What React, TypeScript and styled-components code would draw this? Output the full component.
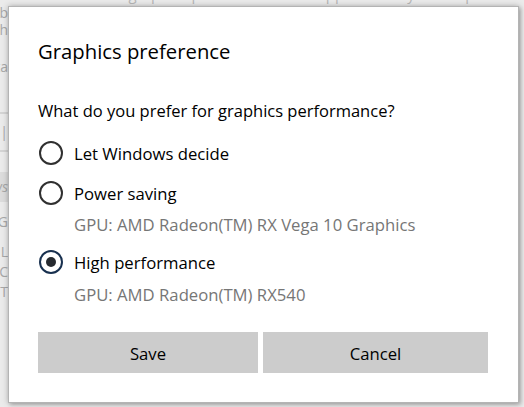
import React from "react";
import styled, { createGlobalStyle } from "styled-components";

const Global = createGlobalStyle`
  html, body { margin: 0; padding: 0; }
  body {
    width: 524px;
    height: 407px;
    overflow: hidden;
    background: #e8e8e8;
    font-family: "Segoe UI", "Open Sans", "Noto Sans", sans-serif;
  }
`;

const Screen = styled.div`
  position: relative;
  width: 524px;
  height: 407px;
  overflow: hidden;
  background: #ebebeb;
`;

const Backdrop = styled.div`
  display: flex;
  flex-direction: column;
  width: 100%;
  height: 100%;
`;

const TopStrip = styled.div`
  height: 6px;
  overflow: hidden;
  padding-left: 60px;
  color: #b8b8b8;
  font-size: 15px;
  line-height: 20px;
  white-space: nowrap;
`;

const TopText = styled.div`
  margin-top: -16px;
`;

const LeftStrip = styled.div`
  display: flex;
  flex-direction: column;
  width: 8px;
  overflow: hidden;
`;

const EdgeRow = styled.div<{ $h: number; $band?: boolean; $line?: boolean }>`
  height: ${(p) => p.$h}px;
  display: flex;
  justify-content: flex-end;
  align-items: center;
  white-space: nowrap;
  color: #a8a8a8;
  font-size: 14px;
  line-height: 14px;
  background: ${(p) => (p.$band ? "#dcdcdc" : "transparent")};
  border-bottom: ${(p) => (p.$line ? "2px solid #d4d4d4" : "none")};
`;

const Dialog = styled.div`
  position: absolute;
  left: 8px;
  top: 6px;
  width: 511px;
  height: 397px;
  box-sizing: border-box;
  background: #ffffff;
  border: 1px solid #b4b4b4;
  box-shadow: 0 0 6px rgba(0, 0, 0, 0.25), 2px 2px 4px rgba(0, 0, 0, 0.2);
  padding: 30px 30px 0 29px;
  display: flex;
  flex-direction: column;
  color: #000;
`;

const Title = styled.h1`
  margin: 0;
  font-weight: 400;
  font-size: 20.3px;
  line-height: 28px;
`;

const Question = styled.p`
  margin: 36px 0 0 0;
  font-size: 16.5px;
  line-height: 20px;
`;

const Options = styled.div`
  display: flex;
  flex-direction: column;
  margin-top: 12px;
`;

const OptionRow = styled.label<{ $gapTop: number }>`
  display: flex;
  align-items: center;
  gap: 11px;
  height: 40px;
  margin-top: ${(p) => p.$gapTop}px;
  font-size: 16.7px;
  line-height: 20px;
`;

const Label = styled.span`
  padding-top: 1px;
`;

const Radio = styled.span<{ $checked?: boolean }>`
  flex: none;
  width: 24px;
  height: 24px;
  margin-left: 1px;
  box-sizing: border-box;
  border-radius: 50%;
  border: 2px solid ${(p) => (p.$checked ? "#18304f" : "#303030")};
  display: flex;
  align-items: center;
  justify-content: center;
  &::after {
    content: "";
    display: ${(p) => (p.$checked ? "block" : "none")};
    width: 10px;
    height: 10px;
    border-radius: 50%;
    background: #262a30;
  }
`;

const Description = styled.div<{ $gapTop: number }>`
  margin: ${(p) => p.$gapTop}px 0 0 36px;
  font-size: 16.7px;
  line-height: 20px;
  color: #767676;
`;

const Buttons = styled.div`
  display: grid;
  grid-template-columns: 220px 1fr;
  gap: 5px;
  margin-top: 27px;
`;

const Button = styled.button`
  height: 41px;
  border: none;
  background: #cccccc;
  color: #000;
  font-family: inherit;
  font-size: 16.7px;
  padding: 0;
  padding-top: 1px;
`;

export default function App() {
  return (
    <>
      <Global />
      <Screen>
        <Backdrop>
          <TopStrip>
            <TopText>
              Choose a graphics preference for an app to modify how it performs
            </TopText>
          </TopStrip>
          <LeftStrip>
            <EdgeRow $h={14}>Bb</EdgeRow>
            <EdgeRow $h={20}>with</EdgeRow>
            <EdgeRow $h={54}>data</EdgeRow>
            <EdgeRow $h={18} $line>&nbsp;</EdgeRow>
            <EdgeRow $h={36} $line>Dropdown|</EdgeRow>
            <EdgeRow $h={20}>&nbsp;</EdgeRow>
            <EdgeRow $h={30} $band>
              <i>Brows</i>
            </EdgeRow>
            <EdgeRow $h={40}>AG</EdgeRow>
            <EdgeRow $h={20}>L</EdgeRow>
            <EdgeRow $h={20}>C</EdgeRow>
            <EdgeRow $h={20}>T</EdgeRow>
          </LeftStrip>
        </Backdrop>
        <Dialog role="dialog">
          <Title>Graphics preference</Title>
          <Question>What do you prefer for graphics performance?</Question>
          <Options>
            <OptionRow $gapTop={0}>
              <Radio />
              <Label>Let Windows decide</Label>
            </OptionRow>
            <OptionRow $gapTop={0}>
              <Radio />
              <Label>Power saving</Label>
            </OptionRow>
            <Description $gapTop={2}>
              GPU: AMD Radeon(TM) RX Vega 10 Graphics
            </Description>
            <OptionRow $gapTop={7}>
              <Radio $checked />
              <Label>High performance</Label>
            </OptionRow>
            <Description $gapTop={3}>GPU: AMD Radeon(TM) RX540</Description>
          </Options>
          <Buttons>
            <Button>Save</Button>
            <Button>Cancel</Button>
          </Buttons>
        </Dialog>
      </Screen>
    </>
  );
}
